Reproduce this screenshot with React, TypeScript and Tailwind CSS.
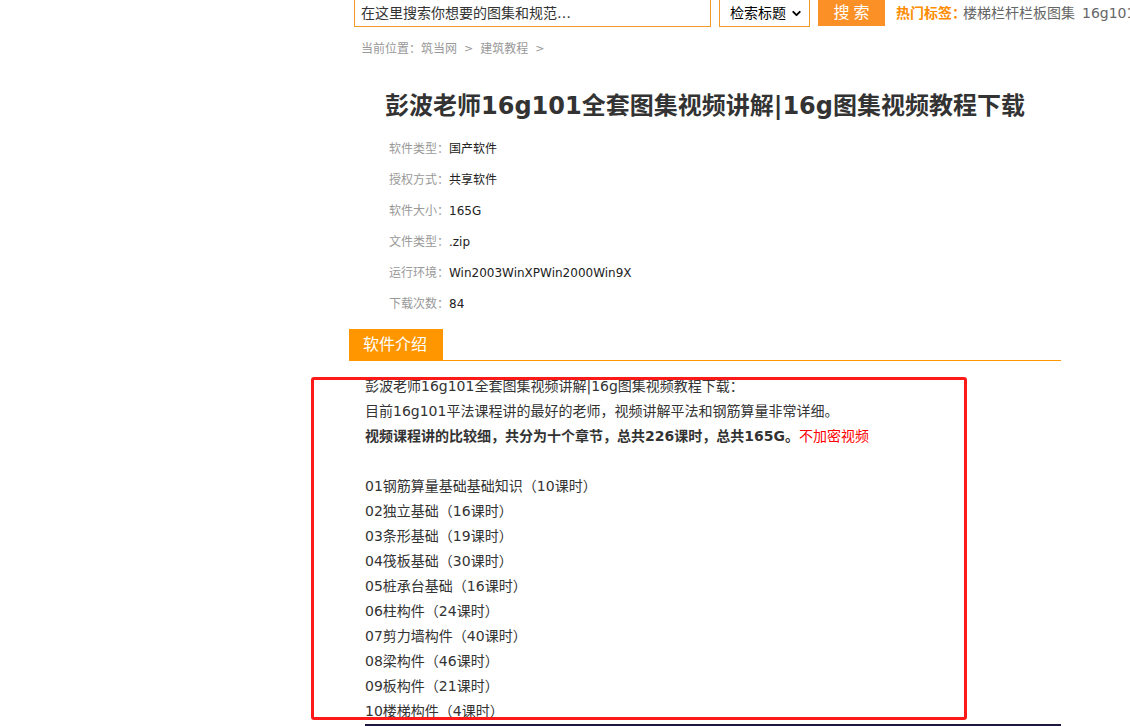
import React from "react";
import { ChevronDown } from "lucide-react";

const info = [
  ["软件类型：", "国产软件"],
  ["授权方式：", "共享软件"],
  ["软件大小：", "165G"],
  ["文件类型：", ".zip"],
  ["运行环境：", "Win2003WinXPWin2000Win9X"],
  ["下载次数：", "84"],
];

const chapters = [
  "01钢筋算量基础基础知识（10课时）",
  "02独立基础（16课时）",
  "03条形基础（19课时）",
  "04筏板基础（30课时）",
  "05桩承台基础（16课时）",
  "06柱构件（24课时）",
  "07剪力墙构件（40课时）",
  "08梁构件（46课时）",
  "09板构件（21课时）",
  "10楼梯构件（4课时）",
];

export default function App() {
  return (
    <div className="w-[1130px] h-[726px] overflow-hidden bg-white relative font-['DejaVu_Sans','Noto_Sans_CJK_SC',sans-serif] text-[#333]">
      <div className="ml-[349px] w-[712px]">
        {/* Search bar */}
        <div className="-mt-[8px] pl-[5px] flex items-start whitespace-nowrap">
          <div className="shrink-0 w-[357px] h-[35px] border border-[#f39a2e] flex items-center pt-[7px] pl-[6px] text-[14px] text-[#333]">
            在这里搜索你想要的图集和规范…
          </div>
          <div className="shrink-0 ml-[8px] w-[91px] h-[35px] border border-[#f39a2e] flex items-center justify-between pt-[7px] pl-[10px] pr-[6px] text-[14px] text-black">
            <span>检索标题</span>
            <ChevronDown size={13} strokeWidth={3.5} />
          </div>
          <div className="shrink-0 ml-[8px] w-[67px] h-[34px] bg-[#fb9126] flex items-center justify-center pt-[8px] text-[16px] text-white tracking-[4px] indent-[4px]">
            搜索
          </div>
          <div className="shrink-0 ml-[11px] h-[35px] flex items-center pt-[7px] text-[14px]">
            <span className="font-bold text-[#ff8c00]">热门标签：</span>
            <span className="text-[#666] ml-[-3px]">楼梯栏杆栏板图集</span>
            <span className="text-[#666] ml-[7px]">16g101图集</span>
          </div>
        </div>

        {/* Breadcrumb */}
        <div className="mt-[13px] pl-[12px] text-[12px] leading-[18px] text-[#999] flex items-center">
          <span>当前位置：筑当网</span>
          <span className="mx-[7px] text-[11px]">&gt;</span>
          <span>建筑教程</span>
          <span className="mx-[7px] text-[11px]">&gt;</span>
        </div>

        {/* Title */}
        <h1 className="mt-[32px] text-center text-[24px] leading-[32px] font-bold text-[#333]">
          彭波老师16g101全套图集视频讲解|16g图集视频教程下载
        </h1>

        {/* Info */}
        <div className="mt-[12px] pl-[40px]">
          {info.map(([label, value]) => (
            <div key={label} className="flex text-[12px] leading-[31px]">
              <span className="w-[60px] text-[#999]">{label}</span>
              <span className="text-[#222]">{value}</span>
            </div>
          ))}
        </div>

        {/* Section header */}
        <div className="mt-[9px] border-b border-[#ff9600]">
          <div className="w-[94px] h-[31px] bg-[#ff9600] text-white text-[16px] flex items-center pl-[14px]">
            软件介绍
          </div>
        </div>

        {/* Content */}
        <div className="mt-[13px] pl-[16px] text-[14px] leading-[25px] text-[#333]">
          <p>彭波老师16g101全套图集视频讲解|16g图集视频教程下载：</p>
          <p>目前16g101平法课程讲的最好的老师，视频讲解平法和钢筋算量非常详细。</p>
          <p>
            <span className="font-bold">视频课程讲的比较细，共分为十个章节，总共226课时，总共165G。</span>
            <span className="text-[#ff0000]">不加密视频</span>
          </p>
          <p className="h-[25px]" />
          {chapters.map((c) => (
            <p key={c}>{c}</p>
          ))}
        </div>

        {/* Image top */}
        <div className="ml-[16px] h-[10px] bg-[#1e1742]" />
      </div>

      {/* Red annotation box */}
      <div className="absolute left-[311px] top-[377px] w-[656px] h-[343px] border-[3px] border-[#ff1a1a] rounded-[3px]" />
    </div>
  );
}
